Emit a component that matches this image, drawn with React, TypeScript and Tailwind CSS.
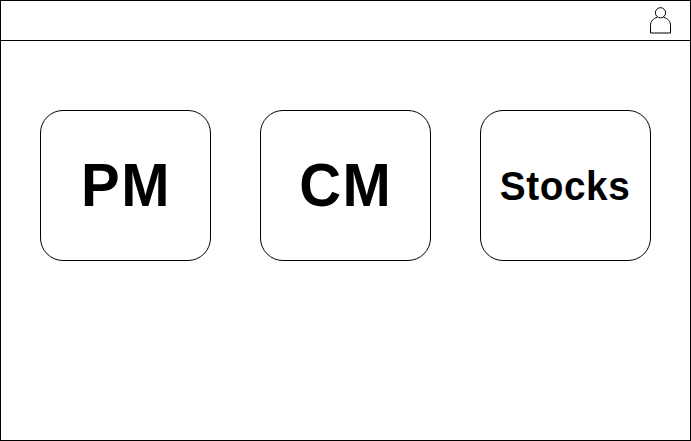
import React from "react";

function UserIcon() {
  return (
    <svg width="22" height="27" viewBox="0 0 22 27" fill="none" stroke="#000" strokeWidth="1" aria-label="User">
      <circle cx="10.5" cy="5.8" r="5.1" />
      <path d="M7.3 10.3C3 11.5 0.5 14.5 0.5 18.5V26H20.5V18.5C20.5 14.5 18 11.5 13.7 10.3" />
    </svg>
  );
}

function Tile({ label, size }: { label: string; size: string }) {
  return (
    <button className="flex h-[151px] w-[171px] items-center justify-center rounded-[23px] border border-black bg-white">
      <span className={`font-bold leading-none ${size}`}>{label}</span>
    </button>
  );
}

export default function App() {
  return (
    <div className="flex h-[441px] w-[691px] flex-col border border-black bg-white font-['Liberation_Sans',Arial,sans-serif] text-black">
      <header className="flex h-10 shrink-0 items-start justify-end border-b border-black pr-[18px] pt-[6px]">
        <UserIcon />
      </header>
      <main className="flex gap-[49px] pl-[39px] pt-[69px]">
        <Tile label="PM" size="text-[62px] tracking-[1.5px] -mt-[2px] scale-x-[0.935]" />
        <Tile label="CM" size="text-[62px] tracking-[1.5px] -mt-[2px] scale-x-[0.935]" />
        <Tile label="Stocks" size="text-[41px] tracking-[0.6px] mt-[2px] mr-px scale-x-[0.945]" />
      </main>
    </div>
  );
}
